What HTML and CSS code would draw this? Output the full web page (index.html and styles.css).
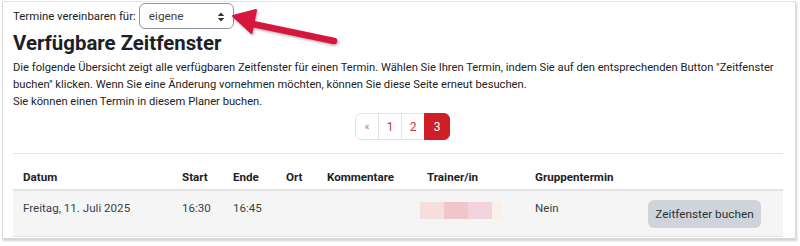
FILE: index.html
```html
<!DOCTYPE html>
<html lang="de">
<head>
<meta charset="utf-8">
<title>Verfügbare Zeitfenster</title>
<link rel="stylesheet" href="styles.css">
</head>
<body>
<div class="frame">
  <div class="selector">
    <label class="selector-label">Termine vereinbaren für:</label>
    <div class="select">
      <span>eigene</span>
      <svg class="caret" width="8" height="10" viewBox="0 0 8 10"><path d="M4 0.5 L7.2 4 H0.8 Z M4 9.5 L0.8 6 H7.2 Z" fill="#333"/></svg>
    </div>
  </div>
  <h2 class="title">Verfügbare Zeitfenster</h2>
  <p class="intro">Die folgende Übersicht zeigt alle verfügbaren Zeitfenster für einen Termin. Wählen Sie Ihren Termin, indem Sie auf den entsprechenden Button "Zeitfenster buchen" klicken. Wenn Sie eine Änderung vornehmen möchten, können Sie diese Seite erneut besuchen.<br>Sie können einen Termin in diesem Planer buchen.</p>
  <nav class="pager">
    <a class="page">«</a><a class="page">1</a><a class="page">2</a><a class="page active">3</a>
  </nav>
  <table class="slots">
    <thead>
      <tr><th class="c-date">Datum</th><th class="c-start">Start</th><th class="c-end">Ende</th><th class="c-ort">Ort</th><th class="c-comm">Kommentare</th><th class="c-trainer">Trainer/in</th><th class="c-group">Gruppentermin</th><th class="c-btn"></th></tr>
    </thead>
    <tbody>
      <tr>
        <td>Freitag, 11. Juli 2025</td><td>16:30</td><td>16:45</td><td></td><td></td>
        <td><div class="blur"><span class="b1"></span><span class="b2"></span><span class="b3"></span><span class="b4"></span></div></td>
        <td>Nein</td>
        <td><button class="book">Zeitfenster buchen</button></td>
      </tr>
    </tbody>
  </table>
  <svg class="arrow" width="120" height="50" viewBox="0 0 120 50">
    <defs><filter id="sh" x="-20%" y="-40%" width="140%" height="180%"><feDropShadow dx="1" dy="1.5" stdDeviation="1.2" flood-color="#000" flood-opacity="0.3"/></filter></defs>
    <g filter="url(#sh)" fill="#d7163c" stroke="#d7163c" stroke-linejoin="round">
      <line x1="22" y1="22" x2="108" y2="40" stroke-width="6.5" stroke-linecap="round"/>
      <path d="M7 15 L30 9 L25.5 32 Z" stroke-width="2"/>
    </g>
  </svg>
</div>
</body>
</html>
```
FILE: styles.css
```css
html, body { margin: 0; padding: 0; background: #fff; }
body {
  font-family: Roboto, "Noto Sans", sans-serif;
  color: #1d2125;
  width: 800px;
  height: 246px;
  overflow: hidden;
}
.frame {
  position: relative;
  margin: 1px 4px 0 2px;
  height: 238px;
  border: 1px solid #d9d9d9;
  border-top-color: #e2e2e2;
  box-shadow: 1px 2px 2px rgba(0,0,0,0.18);
  padding: 0 10px;
  box-sizing: border-box;
}
.selector {
  display: flex;
  align-items: center;
  gap: 3px;
  height: 27px;
}
.selector-label { font-size: 11.4px; color: #1d2125; }
.select {
  display: flex;
  align-items: center;
  justify-content: space-between;
  width: 95px;
  height: 26px;
  box-sizing: border-box;
  border: 1px solid #8f959e;
  border-radius: 6px;
  padding: 0 8px 0 9px;
  font-size: 11.8px;
  color: #3a3f44;
  margin-top: 1px;
}
.caret { margin-top: 1px; }
.title {
  margin: 2px 0 0;
  font-size: 20.4px;
  font-weight: 700;
  line-height: 24px;
  color: #1d2125;
}
.intro {
  margin: 4px -4px 0 0;
  font-size: 11.2px;
  line-height: 17px;
  color: #1d2125;
}
.pager {
  display: flex;
  justify-content: center;
  margin: 3px 0 0 8px;
}
.page {
  display: flex;
  align-items: center;
  justify-content: center;
  width: 24px;
  height: 27px;
  box-sizing: border-box;
  border: 1px solid #e3e3e3;
  margin-left: -1px;
  font-size: 12px;
  color: #c43a3a;
}
.page:first-child { border-radius: 6px 0 0 6px; font-size: 10px; color: #d06060; }
.page.active {
  width: 26px;
  background: #ce1e26;
  border-color: #ce1e26;
  color: #fff;
  border-radius: 0 6px 6px 0;
}
.slots {
  width: 770px;
  margin-top: 13px;
  border-collapse: collapse;
  font-size: 11.6px;
}
.slots th {
  text-align: left;
  font-weight: 700;
  line-height: 14px;
  padding: 16px 0 5px 10px;
  border-top: 1px solid #e6e6e6;
  border-bottom: 2px solid #e2e2e2;
  color: #1d2125;
  vertical-align: bottom;
}
.slots td {
  background: #f5f5f5;
  height: 46px;
  padding: 0 0 0 10px;
  vertical-align: top;
  padding-top: 10px;
  box-sizing: border-box;
  border-bottom: 1px solid #e2e2e2;
  color: #3b3f44;
}
.c-date { width: 149px; }
.c-start { width: 41px; }
.c-end { width: 43px; }
.c-ort { width: 31px; }
.c-comm { width: 90px; }
.c-trainer { width: 98px; }
.c-group { width: 105px; }
.blur { display: flex; height: 17px; margin-left: -7px; margin-top: 1px; }
.blur span { display: block; height: 17px; width: 24px; }
.b1 { background: #f6dede; }
.b2 { background: #f0c6cb; }
.b3 { background: #f3d3dc; }
.b4 { background: #faf0e8; width: 10px !important; }
.slots td:last-child { padding-top: 9px; padding-left: 0; }
.book {
  font-family: inherit;
  font-size: 11.8px;
  color: #2c3136;
  background: #ced4da;
  border: none;
  border-radius: 6px;
  width: 113px;
  height: 28px;
  padding: 0;
  margin-left: 8px;
}
.arrow {
  position: absolute;
  left: 223px;
  top: -1px;
}
```
